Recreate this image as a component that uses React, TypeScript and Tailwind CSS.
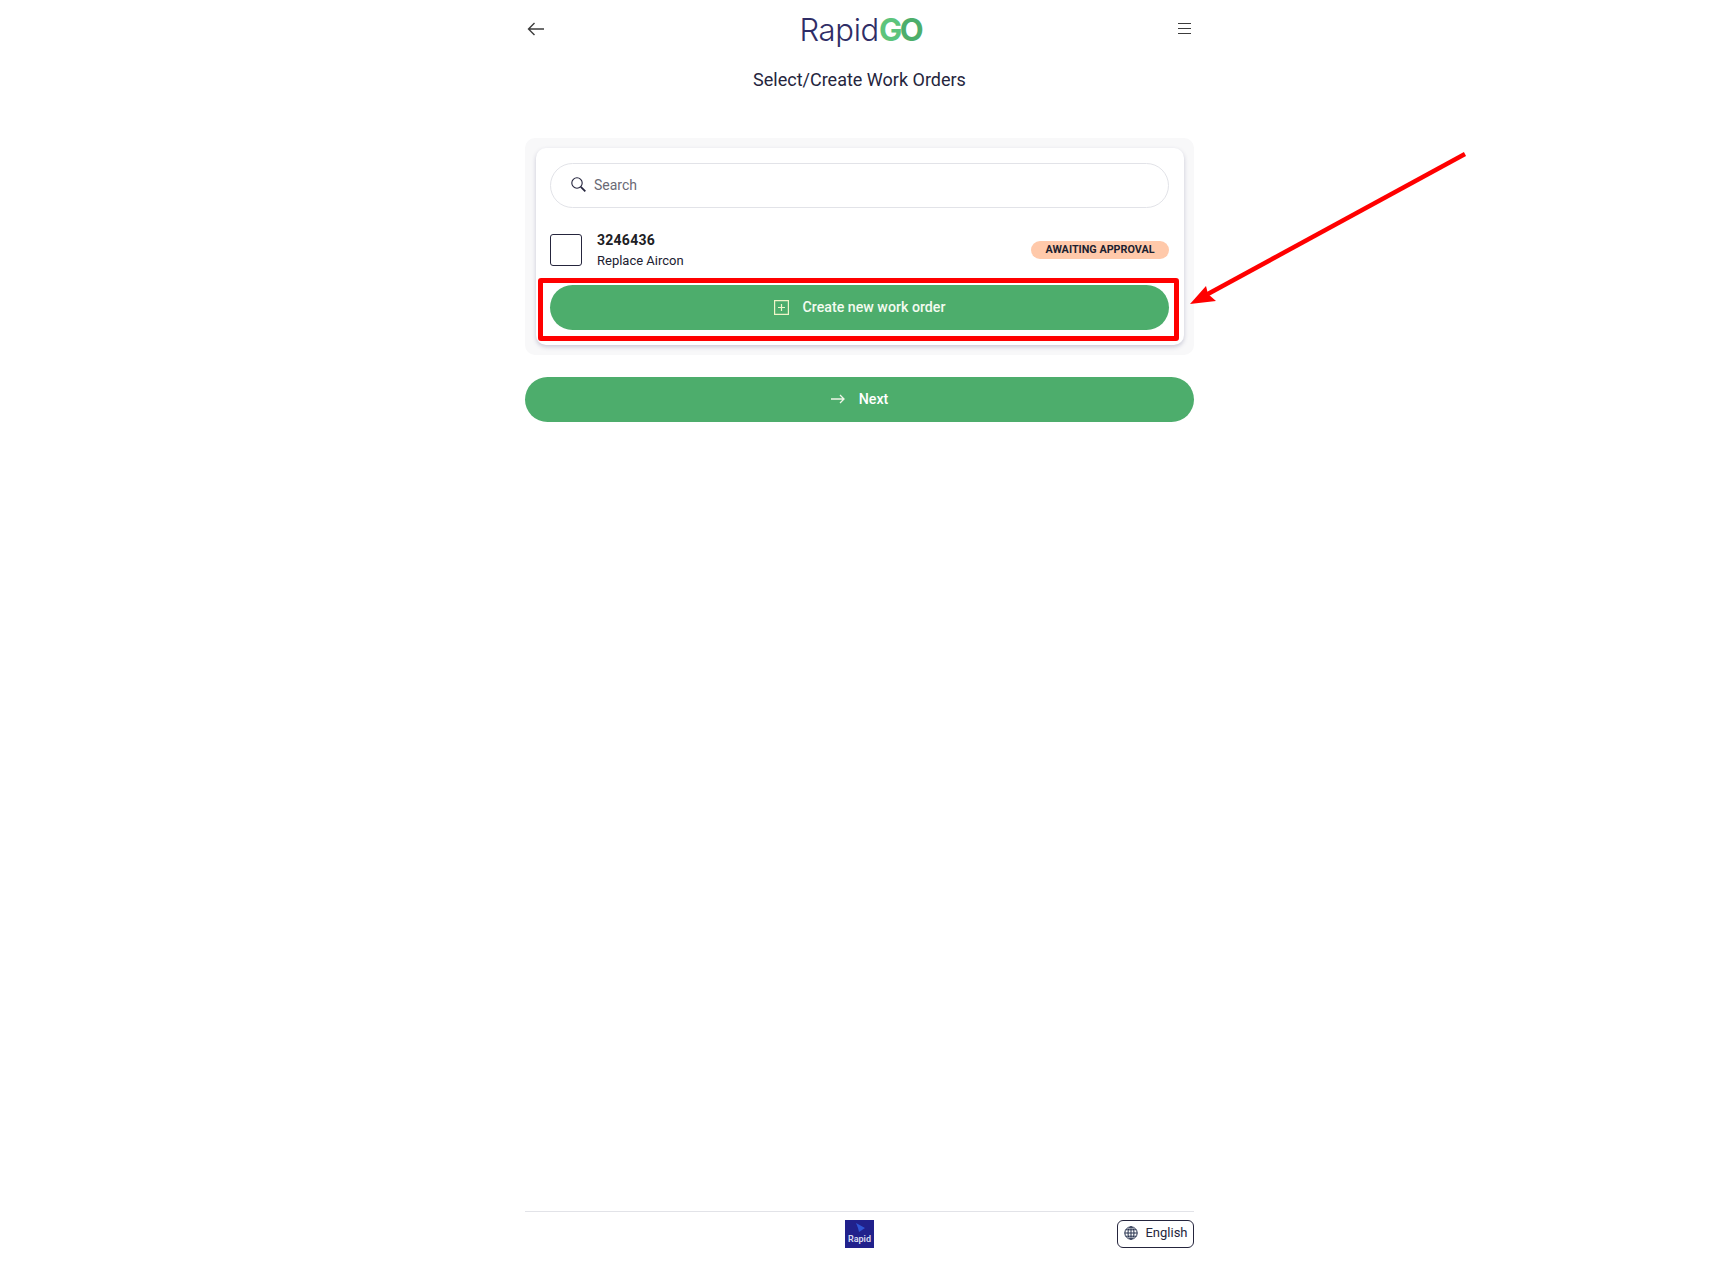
// Rapid footer mark: small navy tile with a play-style glyph above the word
function RapidMark() {
  return (
    <div className="flex h-[28px] w-[29px] flex-col items-center justify-end bg-[#21218c] pb-[4px]">
      <svg width="10" height="10" viewBox="0 0 10 10" className="mb-[1px]">
        <path d="M1 0 L10 5 L4 9 L3 5 Z" fill="#2f55d4" />
      </svg>
      <span className="text-[9px] leading-[10px] font-semibold text-[#d9dcf0]">Rapid</span>
    </div>
  );
}

function GlobeIcon() {
  return (
    <svg width="14" height="14" viewBox="0 0 14 14" fill="none" stroke="#25304d" strokeWidth="1">
      <circle cx="7" cy="7" r="6.2" />
      <ellipse cx="7" cy="7" rx="3" ry="6.2" />
      <path d="M7 .8 V13.2 M.8 7 H13.2 M1.7 3.8 H12.3 M1.7 10.2 H12.3" />
    </svg>
  );
}

// Annotation drawn on top of the screenshot
function AnnotationArrow() {
  return (
    <svg
      className="absolute top-[140px] left-[1180px]"
      width="300"
      height="180"
      viewBox="0 0 300 180"
      fill="none"
    >
      <line x1="285" y1="14" x2="26" y2="155" stroke="#ff0000" strokeWidth="4.5" />
      <path d="M10 164 L26 146 L28 154 L36 161 Z" fill="#ff0000" />
    </svg>
  );
}

export default function App() {
  return (
    <div className="relative min-h-[1270px] bg-white font-['Roboto',sans-serif] text-[#25253d]">
      <div className="mx-auto flex min-h-[1270px] w-[669px] flex-col">
        <header className="flex h-[58px] items-center justify-between pr-[3px] pl-[2px]">
          <svg width="18" height="14" viewBox="0 0 18 14" fill="none" stroke="#3c3c3c" strokeWidth="1.4">
            <path d="M17 7 H1.5 M7.5 1 L1.5 7 L7.5 13" />
          </svg>
          <div className="flex items-baseline font-['Inter',sans-serif] text-[31px] leading-none">
            <span className="font-light tracking-[-0.3px] text-[#2f2d66]">Rapid</span>
            <span className="font-bold tracking-[-2.5px] text-[#5cc47c]">G</span>
            <span className="font-bold text-[#4dae6b]">O</span>
          </div>
          <svg width="13" height="13" viewBox="0 0 13 13" stroke="#3c3c3c" strokeWidth="1.2" className="mb-[2px]">
            <path d="M0 1.5 H13 M0 6.5 H13 M0 11.5 H13" />
          </svg>
        </header>

        <h1 className="mt-[10px] text-center text-[18px] leading-[24px] font-normal">
          Select/Create Work Orders
        </h1>

        <section className="mt-[46px] rounded-[10px] bg-[#f8f8f9] pt-[10px] pr-[10px] pb-[10px] pl-[11px]">
          <div className="rounded-[10px] bg-white px-[14px] py-[15px] shadow-[0_2px_4px_rgba(60,60,110,0.25)]">
            <label className="flex h-[45px] w-[619px] items-center rounded-full border border-[#e2e3e8] pl-[20px]">
              <svg width="15" height="15" viewBox="0 0 15 15" fill="none" stroke="#25253d" className="mb-[3px]">
                <circle cx="6" cy="6" r="5.2" strokeWidth="1.1" />
                <path d="M9.8 9.8 L14.3 14.3" strokeWidth="1.8" />
              </svg>
              <span className="ml-[8px] text-[14px] text-[#6a6a75]">Search</span>
            </label>

            <div className="mt-[26px] flex h-[32px] w-[619px] items-center">
              <div className="h-[32px] w-[32px] rounded-[3px] border border-[#25253d]" />
              <div className="ml-[15px] flex-1">
                <div className="text-[14px] leading-[20px] font-bold tracking-[0.25px] text-[#202024]">3246436</div>
                <div className="text-[13px] leading-[21px] text-[#202030]">Replace Aircon</div>
              </div>
              <span className="flex h-[18px] w-[138px] items-center justify-center rounded-full bg-[#ffc9aa] text-[10.8px] font-bold text-[#1c1f30]">
                AWAITING APPROVAL
              </span>
            </div>

            <button className="mt-[19px] flex h-[45px] w-[619px] items-center justify-center rounded-full bg-[#4dad6c] text-[14.2px] font-medium text-[#f4fbf0]">
              <svg width="15" height="15" viewBox="0 0 15 15" fill="none" stroke="#f0f5c8" strokeWidth="1.2">
                <path d="M.6 .6 H14.4 V14.4 H.6 Z M7.5 4 V11 M4 7.5 H11" />
              </svg>
              <span className="ml-[14px]">Create new work order</span>
            </button>
          </div>
        </section>

        <button className="mt-[22px] flex h-[45px] w-full items-center justify-center rounded-full bg-[#4dad6c] text-[14.2px] font-medium text-white">
          <svg width="14" height="10" viewBox="0 0 14 10" fill="none" stroke="#f0f5e8" strokeWidth="1.3" className="mb-[1px]">
            <path d="M0 5 H13 M9 1 L13 5 L9 9" />
          </svg>
          <span className="ml-[14px]">Next</span>
        </button>

        <footer className="mt-auto mb-[22px] grid h-[37px] grid-cols-[1fr_auto_1fr] items-end border-t border-[#e2e3e8]">
          <div />
          <RapidMark />
          <div className="flex justify-end">
            <button className="flex h-[28px] w-[77px] items-center justify-center rounded-[6px] border border-[#25253d] pb-[2px] pl-[1px] text-[13px]">
              <GlobeIcon />
              <span className="ml-[7px]">English</span>
            </button>
          </div>
        </footer>
      </div>

      {/* red highlight box around the create button */}
      <div className="absolute top-[278px] left-[538px] h-[63px] w-[641px] rounded-[3px] border-[5px] border-[#ff0000]" />
      <AnnotationArrow />
    </div>
  );
}
